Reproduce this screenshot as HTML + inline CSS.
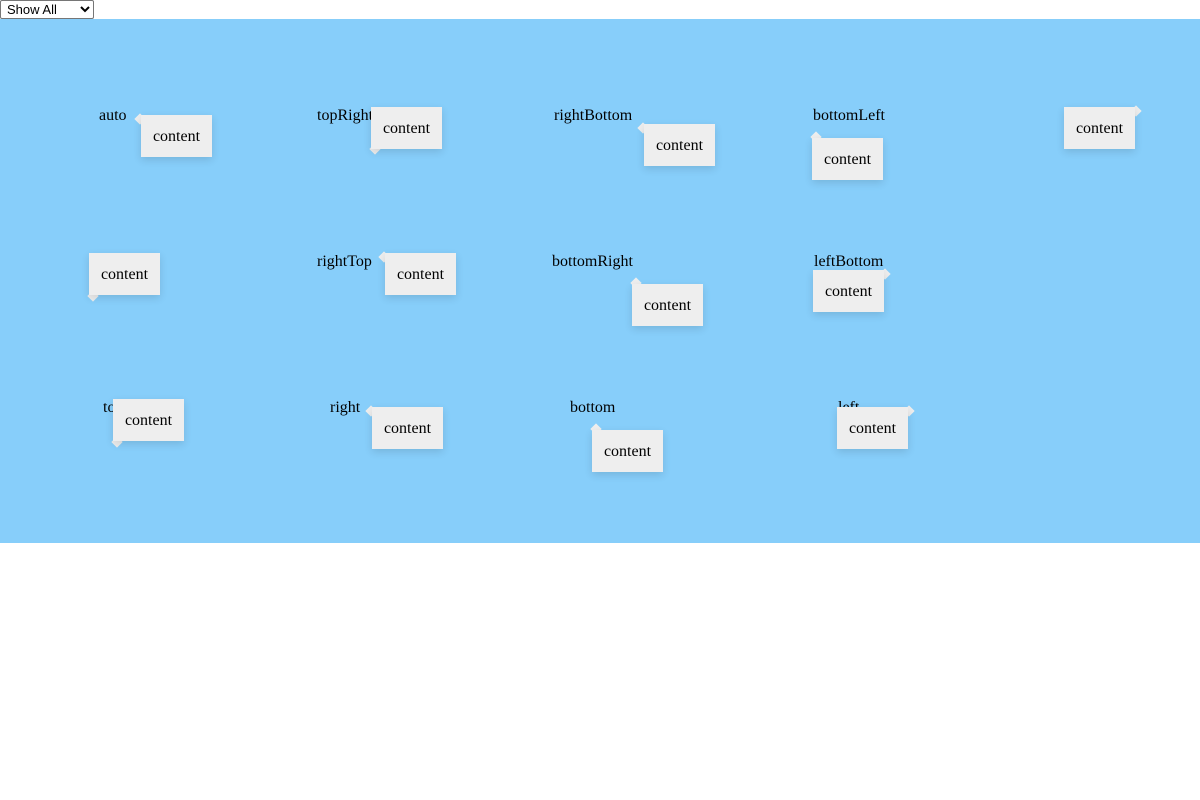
<!DOCTYPE html>
<html><head><style>
body{margin:0;width:1200px;height:800px;background:#fff;font-family:"Liberation Serif",serif;font-size:16px;color:#000;position:relative;overflow:hidden}
select{position:absolute;left:0;top:0;width:94px;height:19px;font-family:"Liberation Sans",sans-serif;font-size:13px;margin:0;padding:0 0 0 2px;border:1px solid #767676;border-radius:2px;background:#fff}
.area{position:absolute;left:0;top:19px;width:1200px;height:524px;background:#87cefa}
.l{position:absolute;line-height:20px;white-space:nowrap}
.b{position:absolute;width:71px;height:42px;background:#eee;line-height:44px;text-align:center;box-shadow:0 3px 8px rgba(0,0,0,.12);z-index:2;overflow:hidden}
.a{position:absolute;width:8px;height:8px;background:#eee;transform:translate(-4px,-4px) rotate(45deg);z-index:1}
</style></head><body>
<select><option>Show All</option></select>
<div class="area"></div>

<div class="l" style="left:99px;top:106px">auto</div>
<div class="a" style="left:140px;top:119px"></div><div class="b" style="left:141px;top:115px">content</div>

<div class="l" style="left:317px;top:106px">topRight</div>
<div class="a" style="left:375px;top:149px"></div><div class="b" style="left:371px;top:107px">content</div>

<div class="l" style="left:554px;top:106px">rightBottom</div>
<div class="a" style="left:643px;top:128px"></div><div class="b" style="left:644px;top:124px">content</div>

<div class="l" style="left:813px;top:106px">bottomLeft</div>
<div class="a" style="left:816px;top:137px"></div><div class="b" style="left:812px;top:138px">content</div>

<div class="a" style="left:1136px;top:111px"></div><div class="b" style="left:1064px;top:107px">content</div>

<div class="a" style="left:93px;top:296px"></div><div class="b" style="left:89px;top:253px">content</div>

<div class="l" style="left:317px;top:252px">rightTop</div>
<div class="a" style="left:384px;top:257px"></div><div class="b" style="left:385px;top:253px">content</div>

<div class="l" style="left:552px;top:252px">bottomRight</div>
<div class="a" style="left:636px;top:283px"></div><div class="b" style="left:632px;top:284px">content</div>

<div class="l" style="left:814px;top:252px">leftBottom</div>
<div class="a" style="left:885px;top:274px"></div><div class="b" style="left:813px;top:270px">content</div>

<div class="l" style="left:103px;top:398px">to</div>
<div class="a" style="left:117px;top:442px"></div><div class="b" style="left:113px;top:399px">content</div>

<div class="l" style="left:330px;top:398px">right</div>
<div class="a" style="left:371px;top:411px"></div><div class="b" style="left:372px;top:407px">content</div>

<div class="l" style="left:570px;top:398px">bottom</div>
<div class="a" style="left:596px;top:429px"></div><div class="b" style="left:592px;top:430px">content</div>

<div class="l" style="left:838px;top:398px">left</div>
<div class="a" style="left:909px;top:411px"></div><div class="b" style="left:837px;top:407px">content</div>
</body></html>
